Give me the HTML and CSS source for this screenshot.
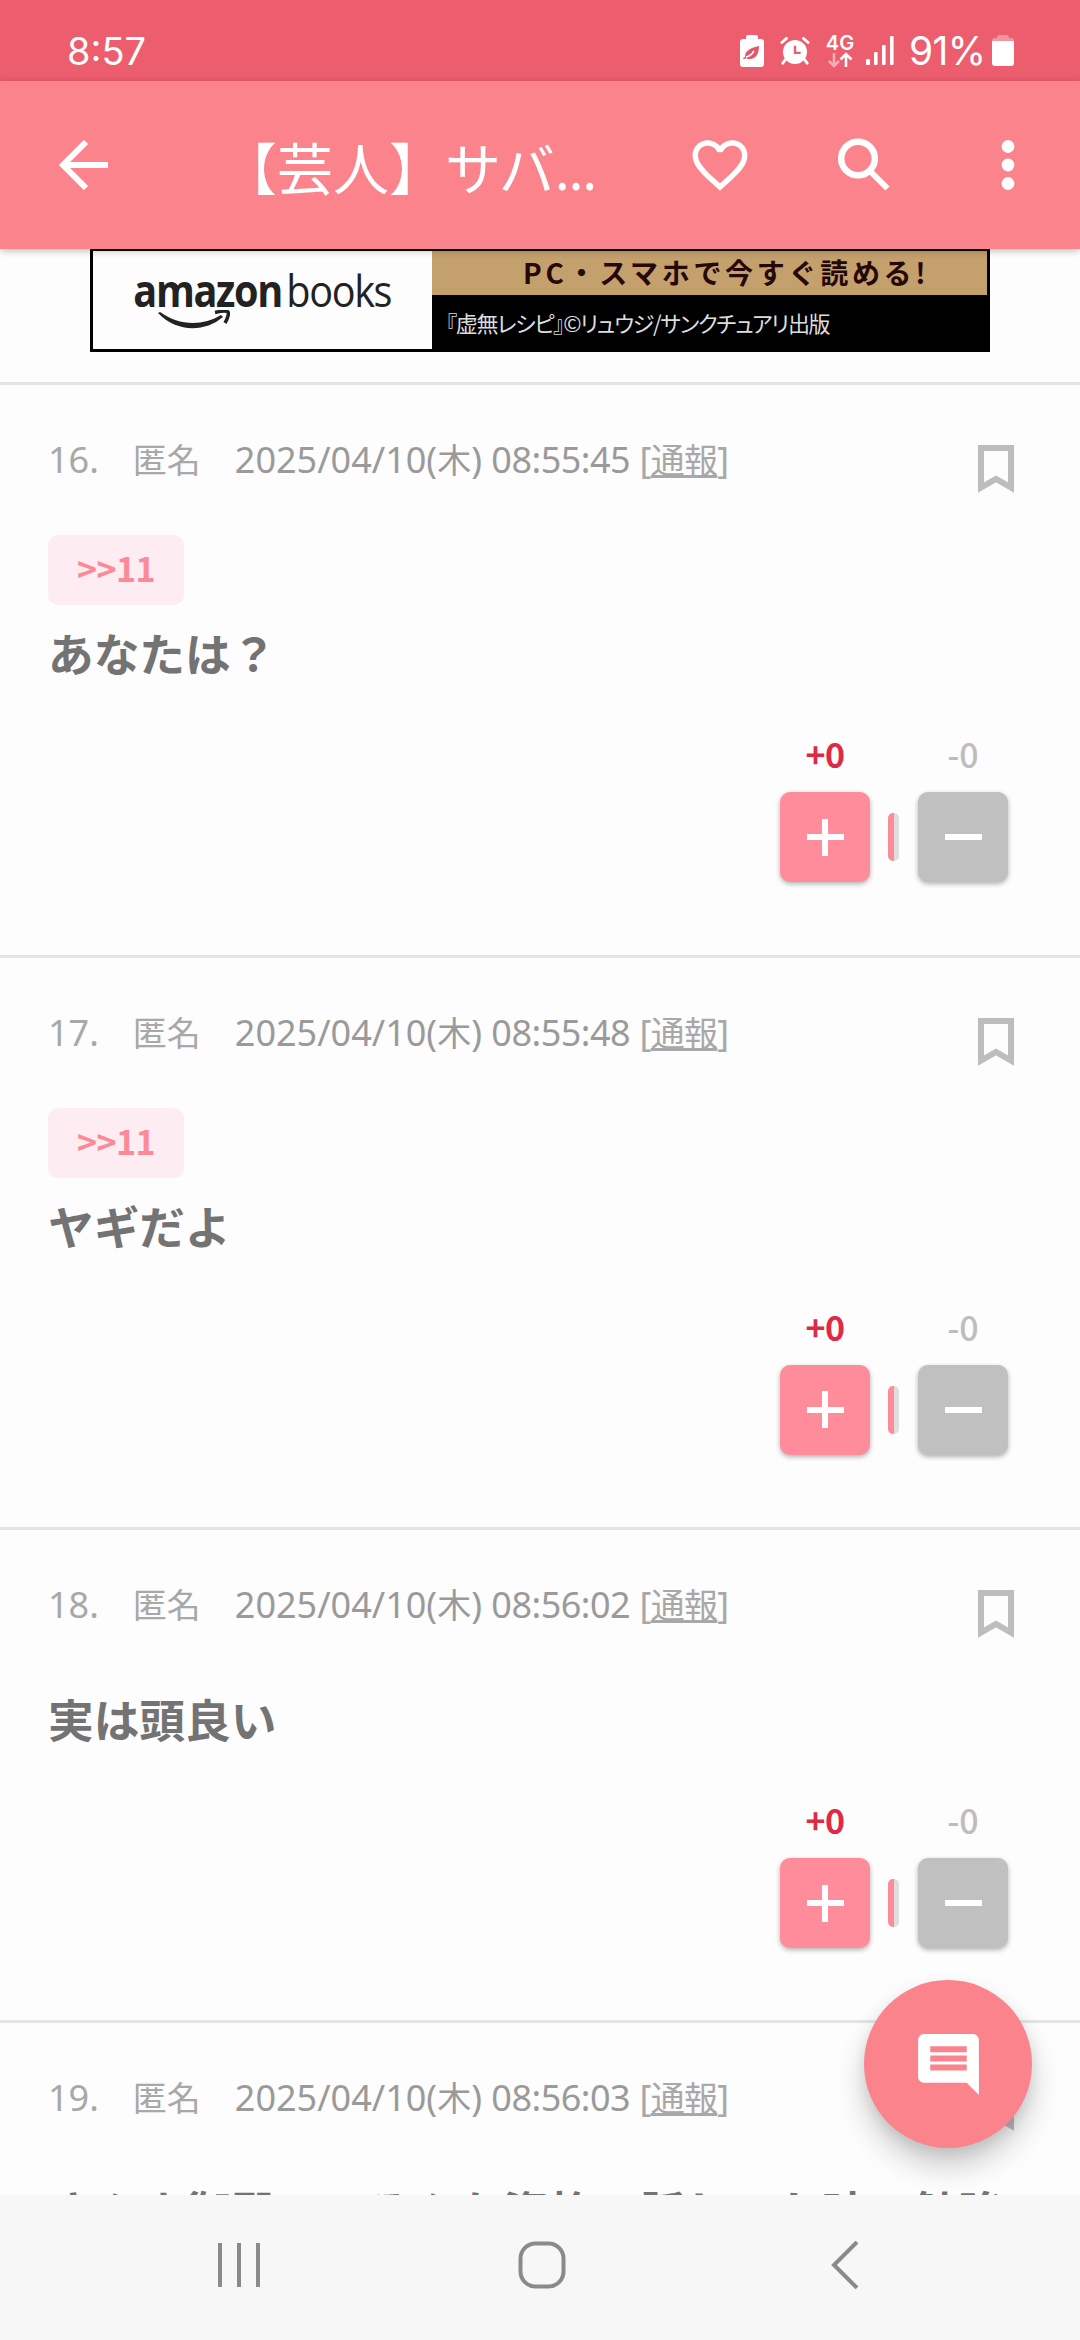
FILE: index.html
```html
<!DOCTYPE html>
<html lang="ja">
<head>
<meta charset="utf-8">
<title>【芸人】サバ...</title>
<link rel="stylesheet" href="styles.css">
</head>
<body>
<div class="screen">
  <div class="statusbar">
    <span class="clock">8:57</span>
    <div class="status-icons">
      <svg class="si-saver" width="24" height="32" viewBox="0 0 24 32"><path fill="#fff" d="M6 4V2q0-2 2-2h8q2 0 2 2v2h3q3 0 3 3v22q0 3-3 3H3q-3 0-3-3V7q0-3 3-3z"/><path fill="#e4566c" d="M19 11c0 9-4 13-9 13-2 0-3 0-4-1-1 1-2 1-3 1 0-1 1-2 2-2 0-7 6-9 14-11z"/><path d="M6 22q5-1 8-6" stroke="#fff" stroke-width="1.5" fill="none"/></svg>
      <svg class="si-alarm" width="30" height="30" viewBox="0 0 32 30"><g fill="none" stroke="#fff" stroke-width="3" stroke-linecap="round"><path d="M2 6l5-4.500M30 6l-5-4.500M6 24l-3 4M26 24l3 4"/></g><circle cx="16" cy="16" r="12.800" fill="#fff"/><path d="M16 9.500V17h6" fill="none" stroke="#ec5d6e" stroke-width="2.500"/></svg>
      <div class="net"><span class="net-label">4G</span>
        <svg width="26" height="16" viewBox="0 0 26 16" fill="none" stroke="#fff" stroke-width="2.600"><path opacity=".5" d="M7 1v13M2 9l5 5 5-5"/><path d="M19 15V2M13.500 7.500L19 2l5.500 5.500"/></svg>
      </div>
      <svg class="si-signal" width="28" height="30" viewBox="0 0 28 30" fill="#fff"><rect x="0" y="23" width="4" height="6" rx="1"/><rect x="8" y="16" width="3.600" height="13" rx="1"/><rect x="16" y="9" width="3.600" height="20" rx="1"/><rect x="24" y="0" width="3.600" height="29" rx="1"/></svg>
      <span class="percent">91%</span>
      <svg class="si-battery" width="22" height="31" viewBox="0 0 22 31"><path fill="#fff" opacity=".35" d="M5 3q0-3 3-3h6q3 0 3 3h2q3 0 3 3v5H0V6q0-3 3-3z"/><path fill="#fff" d="M0 6h22v22q0 3-3 3H3q-3 0-3-3z"/></svg>
    </div>
  </div>
  <header class="appbar">
    <svg class="back" width="50" height="50" viewBox="0 0 50 50" fill="none" stroke="#fff" stroke-width="6"><path d="M49 25H5M27 2L4 25l23 23"/></svg>
    <h1 class="title">【芸人】サバ<span class="dots">...</span></h1>
    <svg class="heart" width="66" height="66" viewBox="0 0 24 24" fill="#fff"><path d="M16.500 3c-1.740 0-3.410.81-4.500 2.090C10.910 3.810 9.240 3 7.500 3 4.420 3 2 5.420 2 8.500c0 3.780 3.400 6.860 8.550 11.540L12 21.350l1.450-1.320C18.600 15.360 22 12.280 22 8.500 22 5.420 19.580 3 16.500 3zm-4.400 15.550l-.1.100-.1-.1C7.140 14.240 4 11.390 4 8.500 4 6.500 5.500 5 7.500 5c1.540 0 3.040.99 3.570 2.360h1.870C13.460 5.990 14.960 5 16.500 5c2 0 3.500 1.500 3.500 3.500 0 2.890-3.140 5.740-7.900 10.050z"/></svg>
    <svg class="search" width="54" height="54" viewBox="0 0 54 54" fill="none" stroke="#fff" stroke-width="6.500"><circle cx="21" cy="20.500" r="16.800"/><path stroke-width="6" d="M33 33L50.500 50.500"/></svg>
    <svg class="more" width="14" height="52" viewBox="0 0 14 52" fill="#fff"><circle cx="7" cy="7.500" r="6.400"/><circle cx="7" cy="26" r="6.400"/><circle cx="7" cy="44.500" r="6.400"/></svg>
  </header>
  <main class="feed">
    <div class="ad">
      <div class="ad-logo"><div class="ad-word"><b>amazon</b><span>books</span></div>
        <svg width="72" height="22" viewBox="0 0 72 22"><path fill="#222" d="M0 3l2-1C21 16 45 16 63 5l2 2C46 23 18 22 0 3z"/><path fill="none" stroke="#222" stroke-width="3.500" d="M57 2.500C64 1 69 1 70 2s0 6-3 11"/></svg>
      </div>
      <div class="ad-text">
        <div class="ad-top">PC・スマホで今すぐ読める!</div>
        <div class="ad-bottom">『虚無レシピ』©リュウジ/サンクチュアリ出版</div>
      </div>
    </div>
    <article class="post">
      <div class="meta"><span class="who">16.<span class="k">　匿名　</span></span>2025/04/10(<span class="k">木</span>) <span class="time">08:55:45</span> <span class="rep">[<u class="k">通報</u>]</span></div>
      <svg class="mark" width="36" height="48" viewBox="0 0 36 48"><path fill="none" stroke="#bdbdbd" stroke-width="6" d="M3 3h30v39.500L18 34 3 42.500z"/></svg>
      <a class="anchor">&gt;&gt;11</a>
      <p class="body">あなたは？</p>
      <div class="votes">
        <div class="vote"><span class="count plus">+0</span><button class="btn pink"><i class="h"></i><i class="v"></i></button></div>
        <div class="meter"></div>
        <div class="vote"><span class="count">-0</span><button class="btn"><i class="h"></i></button></div>
      </div>
    </article>
    <article class="post">
      <div class="meta"><span class="who">17.<span class="k">　匿名　</span></span>2025/04/10(<span class="k">木</span>) <span class="time">08:55:48</span> <span class="rep">[<u class="k">通報</u>]</span></div>
      <svg class="mark" width="36" height="48" viewBox="0 0 36 48"><path fill="none" stroke="#bdbdbd" stroke-width="6" d="M3 3h30v39.500L18 34 3 42.500z"/></svg>
      <a class="anchor">&gt;&gt;11</a>
      <p class="body">ヤギだよ</p>
      <div class="votes">
        <div class="vote"><span class="count plus">+0</span><button class="btn pink"><i class="h"></i><i class="v"></i></button></div>
        <div class="meter"></div>
        <div class="vote"><span class="count">-0</span><button class="btn"><i class="h"></i></button></div>
      </div>
    </article>
    <article class="post short">
      <div class="meta"><span class="who">18.<span class="k">　匿名　</span></span>2025/04/10(<span class="k">木</span>) <span class="time">08:56:02</span> <span class="rep">[<u class="k">通報</u>]</span></div>
      <svg class="mark" width="36" height="48" viewBox="0 0 36 48"><path fill="none" stroke="#bdbdbd" stroke-width="6" d="M3 3h30v39.500L18 34 3 42.500z"/></svg>
      <p class="body">実は頭良い</p>
      <div class="votes">
        <div class="vote"><span class="count plus">+0</span><button class="btn pink"><i class="h"></i><i class="v"></i></button></div>
        <div class="meter"></div>
        <div class="vote"><span class="count">-0</span><button class="btn"><i class="h"></i></button></div>
      </div>
    </article>
    <article class="post short last">
      <div class="meta"><span class="who">19.<span class="k">　匿名　</span></span>2025/04/10(<span class="k">木</span>) <span class="time">08:56:03</span> <span class="rep">[<u class="k">通報</u>]</span></div>
      <svg class="mark" width="36" height="48" viewBox="0 0 36 48"><path fill="none" stroke="#bdbdbd" stroke-width="6" d="M3 3h30v39.500L18 34 3 42.500z"/></svg>
      <p class="body">さんま御殿で、そんな資格の話してた時、勉強</p>
    </article>
    <button class="fab"><svg width="73" height="73" viewBox="0 0 24 24" fill="#fff"><path d="M21.990 4c0-1.100-.89-2-1.990-2H4c-1.100 0-2 .9-2 2v12c0 1.100.9 2 2 2h14l4 4-.01-18zM18 14H6v-2h12v2zm0-3H6V9h12v2zm0-3H6V6h12v2z"/></svg></button>
  </main>
  <nav class="navbar">
    <svg width="48" height="48" viewBox="0 0 48 48" fill="none" stroke="#8a8a8a" stroke-width="4"><path d="M5 2v44M24 2v44M43 2v44"/></svg>
    <svg width="48" height="48" viewBox="0 0 48 48" fill="none" stroke="#8a8a8a" stroke-width="4"><rect x="2.500" y="2.500" width="43" height="43" rx="15"/></svg>
    <svg width="48" height="48" viewBox="0 0 48 48" fill="none" stroke="#8a8a8a" stroke-width="4"><path d="M36 1L13 24l23 23"/></svg>
  </nav>
</div>
</body>
</html>
```
FILE: styles.css
```css
* { box-sizing: border-box; margin: 0; padding: 0; }
body { width: 1080px; height: 2340px; overflow: hidden; background: #fdfdfd; font-family: "Noto Sans", "Noto Sans CJK JP", sans-serif; }
.screen { width: 1080px; height: 2340px; display: flex; flex-direction: column; }
.statusbar { height: 81px; flex: none; background: #ec5d6e; color: #fff; display: flex; justify-content: space-between; align-items: center; padding: 20px 66px 0 67px; font-family: Inter, Roboto, sans-serif; }
.clock { font-size: 38px; line-height: 60px; }
.status-icons { display: flex; align-items: center; height: 60px; }
.si-alarm { margin-left: 16px; }
.net { margin-left: 16px; width: 28px; display: flex; flex-direction: column; align-items: center; }
.net-label { font-size: 20px; line-height: 18px; font-weight: 600; }
.si-signal { margin-left: 12px; }
.percent { width: 75px; font-size: 39px; line-height: 60px; margin: 0 8px 0 15px; letter-spacing: -.6px; white-space: nowrap; }
.appbar { height: 168px; flex: none; background: #fb838b; display: flex; align-items: center; padding: 0 65px 0 59px; box-shadow: 0 2px 7px rgba(0,0,0,.25); position: relative; z-index: 2; }
.title { margin: 3px 0 0 112px; width: 379px; color: #fff; font-weight: 400; font-size: 56px; line-height: 80px; white-space: nowrap; font-family: "Noto Sans CJK JP", sans-serif; }
.dots { font-family: "Noto Sans", sans-serif; letter-spacing: -1.300px; }
.heart { margin-left: 87px; }
.search { margin-left: 84px; }
.more { margin-left: auto; }
.feed { flex: 1; min-height: 0; overflow: hidden; position: relative; }
.ad { width: 900px; height: 103px; margin: 0 auto 30px; background: #000; padding: 2px 3px 3px; display: flex; }
.ad-logo { width: 339px; background: #fdfdfd; color: #222; display: flex; flex-direction: column; align-items: center; }
.ad-word { display: flex; gap: 5px; margin-top: 11px; font-size: 44px; line-height: 56px; height: 48px; font-family: "Open Sans", sans-serif; letter-spacing: -1.500px; transform: scaleX(.9); }
.ad-logo svg { margin: 0 138px 0 0; }
.ad-text { flex: 1; }
.ad-top { height: 44px; background: #c3a06c; color: #250808; font-size: 28px; line-height: 42px; font-weight: 700; padding-left: 91px; letter-spacing: 3.700px; white-space: nowrap; font-family: "Noto Sans CJK JP", sans-serif; }
.ad-bottom { color: #ddd; font-size: 22px; line-height: 55px; padding-left: 14px; white-space: nowrap; font-family: "Noto Sans CJK JP", sans-serif; font-feature-settings: "palt"; letter-spacing: -1.300px; }
.post { position: relative; height: 572.500px; border-top: 3px solid #e4e4e4; padding: 48px 72px 0 48px; display: flex; flex-direction: column; align-items: flex-start; }
.post.short { height: 493px; }
.meta { font-size: 36px; line-height: 54px; height: 54px; white-space: nowrap; color: #9a9a9a; }
.who, .rep { color: #a8a8a8; }
.rep { letter-spacing: -.700px; }
.k { font-size: 34px; }
.time { letter-spacing: -.500px; }
.mark { position: absolute; right: 66px; top: 60px; }
.anchor { margin-top: 48px; width: 136px; height: 70px; border-radius: 10px; background: #fdecf1; color: #fb8a99; font-weight: 700; font-size: 34px; line-height: 66px; letter-spacing: -.500px; text-align: center; font-family: "Noto Sans CJK JP", sans-serif; }
.body { margin-top: 13px; font-size: 45.700px; line-height: 68px; font-weight: 700; color: #737373; white-space: nowrap; font-family: "Noto Sans CJK JP", sans-serif; }
.short .body { margin-top: 52px; }
.last .body { margin-top: 51px; }
.votes { margin: 45px 0 0 auto; display: flex; align-items: flex-end; }
.vote { width: 90px; display: flex; flex-direction: column; align-items: center; }
.count { font-size: 34px; line-height: 46px; margin-bottom: 15px; color: #bdbdbd; font-weight: 500; font-family: "Noto Sans CJK JP", sans-serif; }
.count.plus { color: #e02a45; font-weight: 700; letter-spacing: -.500px; }
.btn { width: 90px; height: 90px; border: 0; border-radius: 10px; background: #c0c0c0; box-shadow: 0 2px 5px rgba(0,0,0,.3); display: grid; place-items: center; }
.btn.pink { background: #ff8c9b; }
.btn i { grid-area: 1 / 1; background: #fff; }
.btn .h { width: 37px; height: 6px; }
.btn .v { width: 6px; height: 37px; }
.meter { width: 11px; height: 48px; margin: 0 19px 21px 18px; border-radius: 5px; background: linear-gradient(90deg, #fd8b99 0 6px, #dedede 6px); }
.fab { position: absolute; left: 864px; top: 1731px; width: 168px; height: 168px; border-radius: 50%; border: 0; background: #fb838b; box-shadow: 0 18px 30px rgba(0,0,0,.2), 0 6px 12px rgba(0,0,0,.08); display: grid; place-items: center; }
.navbar { height: 145px; flex: none; background: #f7f7f7; display: flex; align-items: center; justify-content: space-between; padding: 0 211px 5px 215px; position: relative; z-index: 2; }
```
